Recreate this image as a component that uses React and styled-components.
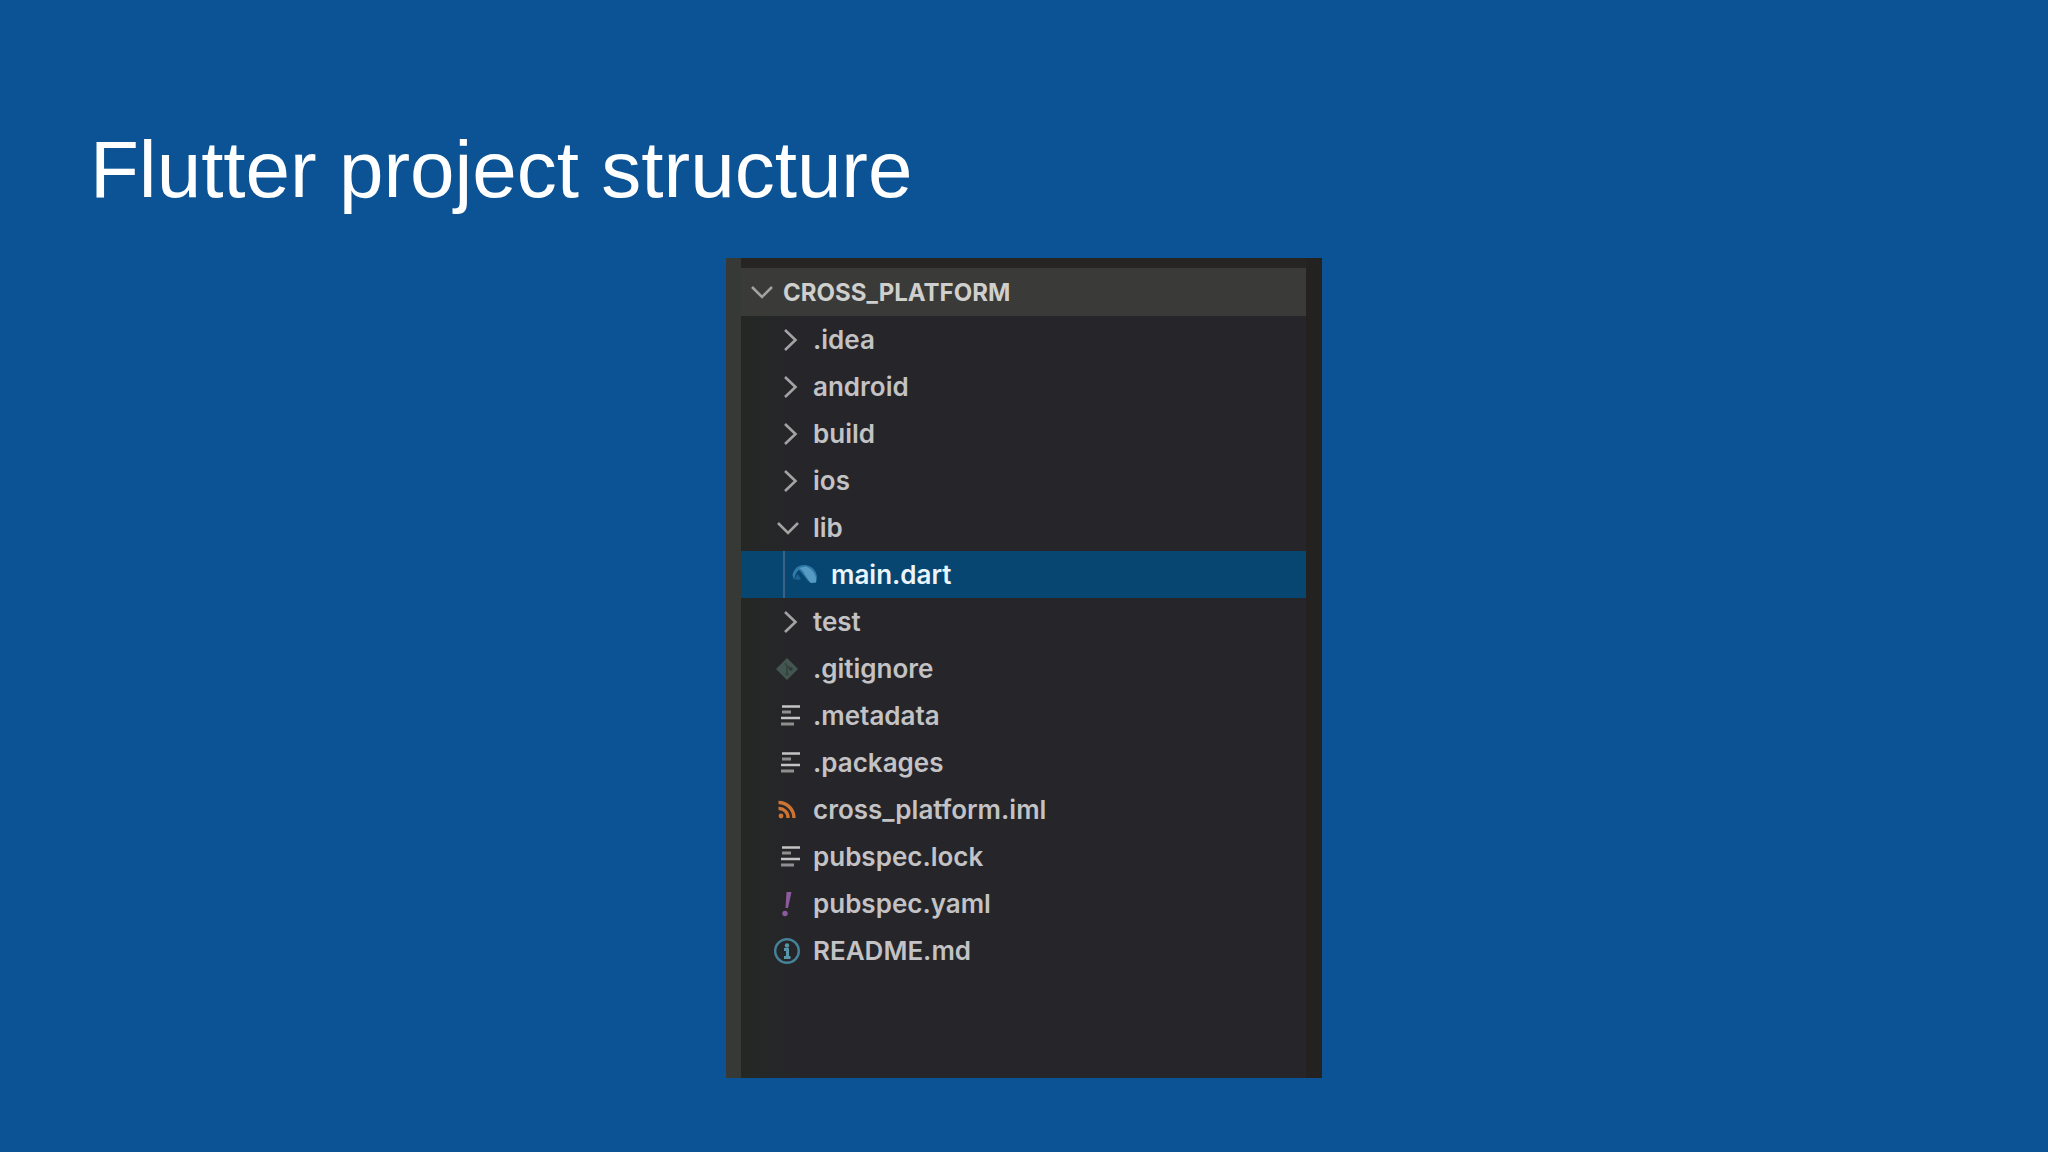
import React, { useState } from 'react';
import styled, { createGlobalStyle } from 'styled-components';

const GlobalStyle = createGlobalStyle`
  * {
    box-sizing: border-box;
  }

  body {
    margin: 0;
    background-color: #0b5394;
  }
`;

const Slide = styled.main`
  display: flex;
  flex-direction: column;
  min-height: 100vh;
  padding: 124px 90px 74px;
`;

const Title = styled.h1`
  margin: 0;
  color: #fff;
  font-family: 'Liberation Sans', Arial, sans-serif;
  font-size: 80px;
  font-weight: 400;
  line-height: 92px;
`;

const Explorer = styled.nav`
  flex: 1;
  align-self: center;
  width: 100%;
  max-width: 596px;
  margin-top: 42px;
  border-left: 15px solid #373936;
  border-right: 16px solid #232221;
  background: linear-gradient(to right, #252725, #26262a 60px);
  font-family: Inter, 'Noto Sans', sans-serif;
`;

const Header = styled.button`
  display: flex;
  align-items: center;
  gap: 8px;
  width: 100%;
  height: 58px;
  padding: 0 6px;
  border: none;
  border-top: 10px solid #272524;
  background-color: #3a3a38;
  color: #cfcfcd;
  font-family: inherit;
  font-size: 24px;
  font-weight: 700;
  cursor: pointer;
`;

const List = styled.ul`
  margin: 0;
  padding: 0;
  list-style: none;
`;

const Row = styled.button`
  position: relative;
  display: flex;
  align-items: center;
  gap: 12px;
  width: 100%;
  height: 47px;
  padding: 0 0 0 ${(props) => (props.$nested ? '50px' : '32px')};
  border: none;
  background-color: ${(props) => (props.$selected ? '#084672' : 'transparent')};
  color: ${(props) => (props.$selected ? '#e9f5fb' : '#c3c2c4')};
  font-family: inherit;
  font-size: 26px;
  font-weight: 600;
  text-align: left;
  cursor: pointer;

  /* indent guide */
  &::before {
    content: '';
    display: ${(props) => (props.$nested ? 'block' : 'none')};
    position: absolute;
    top: 0;
    bottom: 0;
    left: 42px;
    width: 2px;
    background-color: #3c6386;
  }
`;

const Icon = styled.svg`
  flex: none;
  width: 28px;
  height: 28px;
  fill: none;
`;

const ChevronRight = () => (
  <Icon viewBox="0 0 28 28" aria-hidden="true">
    <path d="M12 4 L22.500 14 L12 24" stroke="#a3a3a4" strokeWidth="2.600" />
  </Icon>
);

const ChevronDown = () => (
  <Icon viewBox="0 0 28 28" aria-hidden="true">
    <path d="M5 9 L15 19 L25 9" stroke="#a3a3a4" strokeWidth="2.600" />
  </Icon>
);

const DartIcon = () => (
  <Icon viewBox="0 0 28 28" aria-hidden="true">
    <path d="M1.500 14 C3 7 8 3.500 14 4 C21 4.500 26 10 26 17 L25 22 L20 22 C15 19 12 12 8 9 C6 10 4 14 3 19 Z" fill="#2f7aa9" />
    <path d="M8 7 C13 9 15 17 20 22 L25 21 C26 15 22 8 15 5.500 Z" fill="#569bc4" />
    <path d="M3.500 18 L6.500 13 L10 18 L7 19 Z" fill="#1f628f" />
  </Icon>
);

const GitIcon = () => (
  <Icon viewBox="0 0 28 28" aria-hidden="true">
    <path d="M14 3 L25 14 L14 25 L3 14 Z" fill="#435650" />
    <path d="M12 8 L14 11 V19 M14 11 L18 14" stroke="#35423e" strokeWidth="1.600" />
    <circle cx="18" cy="14" r="1.800" fill="#2f3a37" />
    <circle cx="14" cy="19" r="1.600" fill="#35423e" />
  </Icon>
);

const TextIcon = () => (
  <Icon viewBox="0 0 28 28" aria-hidden="true">
    <path d="M9 4.500 H27 M8 16 H27" stroke="#c4c4c4" strokeWidth="2.600" />
    <path d="M9 10 H18 M8 22 H21" stroke="#8f8f90" strokeWidth="3" />
  </Icon>
);

const FeedIcon = () => (
  <Icon viewBox="0 0 28 28" aria-hidden="true">
    <circle cx="8" cy="20" r="2.400" fill="#cd7433" />
    <path d="M5.500 12.500 A9 9 0 0 1 15 22 M5.500 6.500 A15.500 15.500 0 0 1 21 22" stroke="#cd7433" strokeWidth="3.400" />
  </Icon>
);

const YamlIcon = () => (
  <Icon viewBox="0 0 28 28" aria-hidden="true">
    <path d="M13.500 2 H18.500 L15 18 H12.500 Z" fill="#8d5a9d" />
    <circle cx="12" cy="23.500" r="2.700" fill="#8d5a9d" />
  </Icon>
);

const InfoIcon = () => (
  <Icon viewBox="0 0 28 28" aria-hidden="true">
    <circle cx="14" cy="14" r="11.800" stroke="#458298" strokeWidth="2.400" />
    <circle cx="14" cy="8.500" r="2.200" fill="#5795a8" />
    <path d="M11 12.500 H14.500 V20 M11 20.500 H17.500" stroke="#5795a8" strokeWidth="3" />
  </Icon>
);

const files = [
  { name: '.idea', icon: ChevronRight },
  { name: 'android', icon: ChevronRight },
  { name: 'build', icon: ChevronRight },
  { name: 'ios', icon: ChevronRight },
  { name: 'lib', icon: ChevronDown, children: [{ name: 'main.dart', icon: DartIcon }] },
  { name: 'test', icon: ChevronRight },
  { name: '.gitignore', icon: GitIcon },
  { name: '.metadata', icon: TextIcon },
  { name: '.packages', icon: TextIcon },
  { name: 'cross_platform.iml', icon: FeedIcon },
  { name: 'pubspec.lock', icon: TextIcon },
  { name: 'pubspec.yaml', icon: YamlIcon },
  { name: 'README.md', icon: InfoIcon },
];

const FileTree = ({ items, nested, selected, onSelect }) => (
  <List>
    {items.map(({ name, icon: FileIcon, children }) => (
      <li key={name}>
        <Row
          type="button"
          $nested={nested}
          $selected={selected === name}
          onClick={() => onSelect(name)}
        >
          <FileIcon />
          {name}
        </Row>
        {children && (
          <FileTree items={children} nested selected={selected} onSelect={onSelect} />
        )}
      </li>
    ))}
  </List>
);

const App = () => {
  const [open, setOpen] = useState(true);
  const [selected, setSelected] = useState('main.dart');

  return (
    <>
      <GlobalStyle />
      <Slide>
        <Title>Flutter project structure</Title>
        <Explorer aria-label="Project files">
          <Header type="button" aria-expanded={open} onClick={() => setOpen(!open)}>
            {open ? <ChevronDown /> : <ChevronRight />}
            CROSS_PLATFORM
          </Header>
          {open && <FileTree items={files} selected={selected} onSelect={setSelected} />}
        </Explorer>
      </Slide>
    </>
  );
};

export default App;
